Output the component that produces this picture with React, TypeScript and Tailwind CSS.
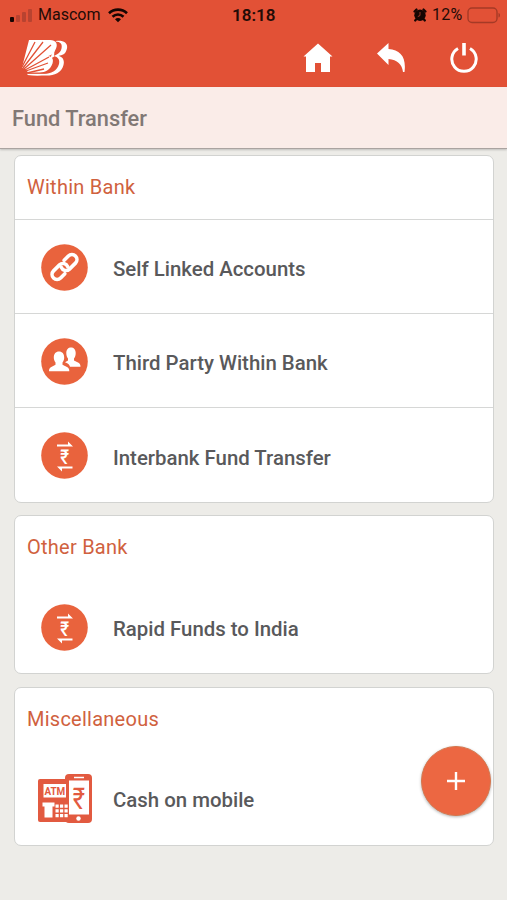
import type { ReactNode } from "react";

function StatusBar() {
  return (
    <div className="relative flex h-[30px] items-center justify-between pl-[9px] pr-[6px] text-[#230b06]">
      <div className="flex items-center">
        <svg className="h-[15px] w-[24px]" viewBox="0 0 24 15">
          <rect x="1" y="9" width="4" height="5" rx="1" fill="#160502" />
          <g fill="#b84330">
            <rect x="7" y="7" width="4" height="7" rx="1" />
            <rect x="13" y="4" width="4" height="10" rx="1" />
            <rect x="19" y="1" width="4" height="13" rx="1" />
          </g>
        </svg>
        <span className="ml-[5px] w-[64px] whitespace-nowrap text-[16px]">Mascom</span>
        <svg className="ml-[6px] h-[15px] w-[20px]" viewBox="0 0 20 15" fill="none" stroke="#160502" strokeWidth="2.6">
          <path d="M1 5.2C6 .4 14 .4 19 5.2" />
          <path d="M4.5 8.7c3.2-3 7.8-3 11 0" />
          <path d="M7 11.2c1.8-1.6 4.2-1.6 6 0l-3 3z" fill="#160502" stroke="none" />
        </svg>
      </div>
      <span className="absolute left-[232px] top-[3px] text-[17px] font-semibold leading-6">18:18</span>
      <div className="flex items-center">
        <svg className="h-[14px] w-[14px]" viewBox="0 0 14 14">
          <circle cx="7" cy="7.2" r="5.7" fill="#160502" />
          <path d="M1.5 3.5l2-2M12.5 3.5l-2-2M3 11.5l-.8 1M11 11.5l.8 1" stroke="#160502" strokeWidth="2.2" strokeLinecap="round" />
          <path d="M7 4v3.5L4.8 8.6" fill="none" stroke="#b84330" strokeWidth="0.8" />
        </svg>
        <span className="ml-[5px] w-[33px] whitespace-nowrap text-[16px] tracking-[0.2px]">12%</span>
        <svg className="ml-[2px] h-[17px] w-[34px]" viewBox="0 0 34 17">
          <rect x="1" y="1" width="29" height="14.5" rx="4" fill="none" stroke="#a53a26" strokeWidth="1.4" />
          <path d="M31.5 6v4.5c2-.5 2-4 0-4.5z" fill="#a53a26" />
        </svg>
      </div>
    </div>
  );
}

function BankLogo() {
  return (
    <svg className="h-[38px] w-[48px]" viewBox="0 0 48 38">
      {/* outer B edge */}
      <path
        fill="#fff"
        d="M36 2c10-1 12.5 4 10.500 9-1 4-4 5-8 6 5 1 6 5 5 9-2 8-9 10.500-17 10.500-6 0-12 .5-19-.5v-1.500h18z"
      />
      {/* gap between the two letters */}
      <path
        fill="#e25136"
        d="M35 2.500c6 0 7.500 3 6.500 7-1 4-4 6-8 7.500 5 1 6.500 4 5.500 8-2 7-8 9.800-15 9.800H8v-3l26-14z"
      />
      {/* front B with a sunburst cut out of it */}
      <path
        fill="#fff"
        d="M9 1h21c6 0 8 4 6 8.500-1.500 4-4 6.500-7.500 7.500 4.500 1 5 4 4 7.500-2 6-7 9-13 9H8l-2-3-4-2z"
      />
      <path
        fill="none"
        stroke="#e25136"
        strokeWidth="1.3"
        d="M2 28 15 3M3 29 23 3M4 30 31 6M5 31l24-13M6 32l22-8M7 34l17-4"
      />
    </svg>
  );
}

function HomeIcon() {
  return (
    <svg className="h-[30px] w-[30px]" viewBox="0 0 30 30" fill="#fff">
      <path d="M15 .5 29.500 13.500H27V29h-9v-9h-6v9H3V13.500H.5z" />
    </svg>
  );
}

function BackIcon() {
  return (
    <svg className="h-[30px] w-[29px]" viewBox="0 0 29 30" fill="#fff">
      <path d="M0 10.500 11.500 0v6c12 1 18 8 16 23h-1.500c-1-8-5.500-12-14.500-13v6z" />
    </svg>
  );
}

function PowerIcon() {
  return (
    <svg className="h-[31px] w-[28px]" viewBox="0 0 28 31" fill="none" stroke="#fff" strokeWidth="3">
      <path d="M8 5.5A12.2 12.2 0 1 0 20 5.5" />
      <path d="M14 0v12.5" strokeWidth="3.6" />
    </svg>
  );
}

function Disc({ children }: { children: ReactNode }) {
  return (
    <svg className="h-[47px] w-[47px]" viewBox="0 0 47 47">
      <circle cx="23.5" cy="23.5" r="23.3" fill="#e9633d" />
      {children}
    </svg>
  );
}

function LinkIcon() {
  return (
    <Disc>
      <g transform="rotate(-45 23.5 23)" fill="none" stroke="#fff" strokeWidth="3.6" strokeLinecap="round">
        <path d="M19 28h-6a5 5 0 0 1 0-10h8.5a5 5 0 0 1 4.5 7" />
        <path d="M28 18h6a5 5 0 0 1 0 10h-8.5a5 5 0 0 1-4.5-7" />
      </g>
    </Disc>
  );
}

function PeopleIcon() {
  return (
    <Disc>
      <path
        fill="#fff"
        d="M27 20.500c-1-1-1.700-3-1.700-5.500 0-3.500 2-5.500 4.700-5.500s4.700 2 4.700 5.500c0 2.500-.7 4.500-1.700 5.500v2l4.500 2.300c1.500 1 2 2 2 4H29c-.5-2-1.500-3-5-4.500l3-1.800z"
      />
      <path
        fill="#fff"
        d="M14.500 24.500c-1-1.500-1.700-3-1.700-4.800 0-4 2-6.200 5.200-6.200s5.200 2.200 5.200 6.200c0 1.800-.7 3.300-1.700 4.800v2.300l4.500 2.200c1.800 1 2.300 2 2.300 4.200H8c0-2.200.5-3.200 2.300-4.200l4.200-2.200z"
      />
    </Disc>
  );
}

function RupeeIcon() {
  return (
    <Disc>
      <path d="M16 14.500h16l-5-5v3H16zM31.500 34.500H16l5 5v-3h10.500z" fill="#fff" />
      <text
        transform="translate(23.8 31.5) scale(1 1.2)"
        fontSize="17"
        fontWeight="500"
        textAnchor="middle"
        fill="#fff"
        className="font-['Roboto','DejaVu_Sans',sans-serif]"
      >
        ₹
      </text>
    </Disc>
  );
}

function AtmIcon() {
  return (
    <svg className="h-[50px] w-[56px]" viewBox="0 0 56 50">
      <rect x="1" y="5" width="32" height="43" rx="2" fill="#e25a40" />
      <rect x="28" y="0" width="27" height="49" rx="4" fill="#e25a40" />
      <rect x="6.5" y="10" width="22.5" height="13.5" fill="#fff" />
      <text
        transform="translate(17.8 21) scale(0.95 1.12)"
        fontSize="10.4"
        fontWeight="700"
        textAnchor="middle"
        fill="#e25a40"
        className="font-['Roboto',sans-serif]"
      >
        ATM
      </text>
      <path d="M5.500 28.500h12v4h-2v11h-8v-11h-2z" fill="#fff" />
      <g fill="#fff">
        <path d="M18.500 30.500h3.200v3.200h-3.200zM23 30.500h3.200v3.200H23zM27.500 30.500h3.200v3.200h-3.200z" />
        <path d="M18.500 35.200h3.200v3.200h-3.200zM23 35.200h3.200v3.200H23zM27.500 35.200h3.200v3.200h-3.200z" />
        <path d="M18.500 40h3.200v3.200h-3.200zM23 40h3.200v3.200H23zM27.500 40h3.200v3.200h-3.200z" />
      </g>
      <rect x="32" y="6.5" width="20" height="34" fill="#fff" />
      <path d="M37 3.500h10" stroke="#fff" strokeWidth="1.5" />
      <circle cx="41.5" cy="44.5" r="2.2" fill="#fff" />
      <text
        transform="translate(42 34.5) scale(0.95 1.2)"
        fontSize="25"
        fontWeight="400"
        textAnchor="middle"
        fill="#e25a40"
        className="font-['Roboto','DejaVu_Sans',sans-serif]"
      >
        ₹
      </text>
    </svg>
  );
}

function Card({ title, children }: { title: string; children: ReactNode }) {
  return (
    <section className="rounded-[7px] border-[1.5px] border-[#d2d3d1] bg-white">
      <h2 className="flex h-[63px] items-center pb-px pl-[12px] text-[20px] tracking-[0.25px] text-[#d0613e]">{title}</h2>
      {children}
    </section>
  );
}

function Row({ icon, label, divided }: { icon: ReactNode; label: string; divided?: boolean }) {
  return (
    <div className={divided ? "flex h-[94.2px] items-center border-t-[1.5px] border-[#d6d7d6] pt-[2px]" : "flex h-[94px] items-center pt-[2px]"}>
      <div className="flex w-[98px] justify-center pl-px">{icon}</div>
      <span className="pt-[4px] text-[20.4px] font-medium text-[#59595b]">{label}</span>
    </div>
  );
}

export default function App() {
  return (
    <div className="relative h-[900px] w-[507px] overflow-hidden bg-[#edece8] font-['Roboto',sans-serif]">
      <header className="h-[87px] bg-[#e25136]">
        <StatusBar />
        <div className="flex h-[57px] items-start justify-between pl-[20px] pr-[29px]">
          <div className="pt-[9px]">
            <BankLogo />
          </div>
          <nav className="flex items-start gap-[44px] pt-[13px]">
            <HomeIcon />
            <BackIcon />
            <PowerIcon />
          </nav>
        </div>
      </header>
      <h1 className="flex h-[62px] items-center border-b border-[#aaa3a0] bg-[#faece8] pl-[12px] pt-[3px] text-[21.8px] font-medium text-[#817875] shadow-[0_1px_2px_rgba(0,0,0,0.2)]">
        Fund Transfer
      </h1>
      <main className="flex flex-col gap-[12.5px] pl-[14px] pr-[13px] pt-[6px]">
        <Card title="Within Bank">
          <Row icon={<LinkIcon />} label="Self Linked Accounts" divided />
          <Row icon={<PeopleIcon />} label="Third Party Within Bank" divided />
          <Row icon={<RupeeIcon />} label="Interbank Fund Transfer" divided />
        </Card>
        <Card title="Other Bank">
          <Row icon={<RupeeIcon />} label="Rapid Funds to India" />
        </Card>
        <Card title="Miscellaneous">
          <Row icon={<AtmIcon />} label="Cash on mobile" />
        </Card>
      </main>
      <button className="absolute left-[421px] top-[746px] flex h-[70px] w-[70px] items-center justify-center rounded-full border border-[#d5764c] bg-[#ec6742] shadow-[0_1px_3px_rgba(0,0,0,0.3)]">
        <svg className="h-[18px] w-[18px]" viewBox="0 0 18 18" stroke="#fff" strokeWidth="2.4">
          <path d="M9 0v18M0 9h18" />
        </svg>
      </button>
    </div>
  );
}
